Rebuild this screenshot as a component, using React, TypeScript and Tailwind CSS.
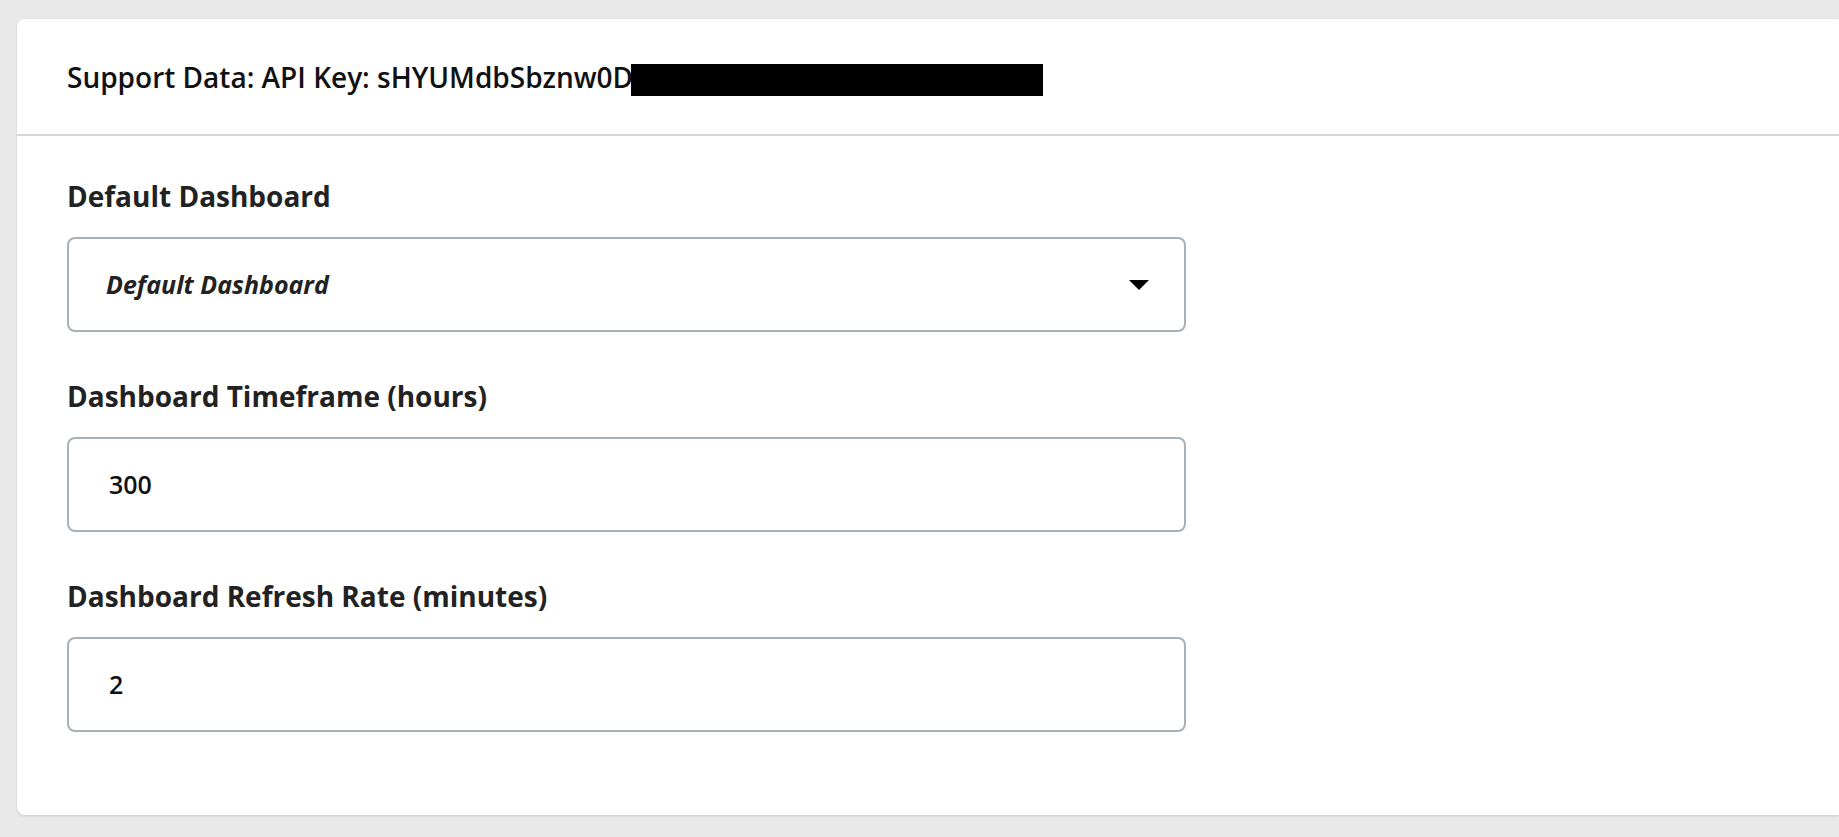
import React from "react";

const font = { fontFamily: '"Open Sans", "Noto Sans", sans-serif' };

function Label({ children }: { children: React.ReactNode }) {
  return (
    <div className="text-[28px] leading-[34px] font-bold text-[#222222] mb-[24px]">
      {children}
    </div>
  );
}

export default function App() {
  return (
    <div className="min-h-screen w-full overflow-hidden bg-[#e9e9e9] pt-[19px] pl-[17px]" style={font}>
      <div className="bg-white rounded-l-[8px] shadow-[0_1px_3px_rgba(0,0,0,0.12)]">
        <div className="h-[117px] flex items-center px-[50px] border-b-2 border-[#d3d7db]">
          <span className="text-[28px] font-semibold text-[#111111] whitespace-nowrap">
            Support Data: API Key: sHYUMdbSbznw0D
          </span>
          <span className="inline-block shrink-0 w-[412px] h-[32px] bg-black -ml-[2px] mt-[6px]" />
        </div>
        <div className="px-[50px] pt-[43px] pb-[83px]">
          <Label>Default Dashboard</Label>
          <div className="w-[1119px] h-[95px] border-2 border-[#a8b1b9] rounded-[8px] flex items-center justify-between pl-[37px] pr-[35px]">
            <span className="text-[25px] font-bold italic text-[#222222]">
              Default Dashboard
            </span>
            <svg width="20" height="10" viewBox="0 0 20 10">
              <path d="M0 0 L20 0 L10 10 Z" fill="#000" />
            </svg>
          </div>

          <div className="mt-[47px]">
            <Label>Dashboard Timeframe (hours)</Label>
            <div className="w-[1119px] h-[95px] border-2 border-[#a8b1b9] rounded-[8px] flex items-center pl-[40px]">
              <span className="text-[25px] font-semibold text-[#111111]">300</span>
            </div>
          </div>

          <div className="mt-[47px]">
            <Label>Dashboard Refresh Rate (minutes)</Label>
            <div className="w-[1119px] h-[95px] border-2 border-[#a8b1b9] rounded-[8px] flex items-center pl-[40px]">
              <span className="text-[25px] font-semibold text-[#111111]">2</span>
            </div>
          </div>
        </div>
      </div>
    </div>
  );
}
